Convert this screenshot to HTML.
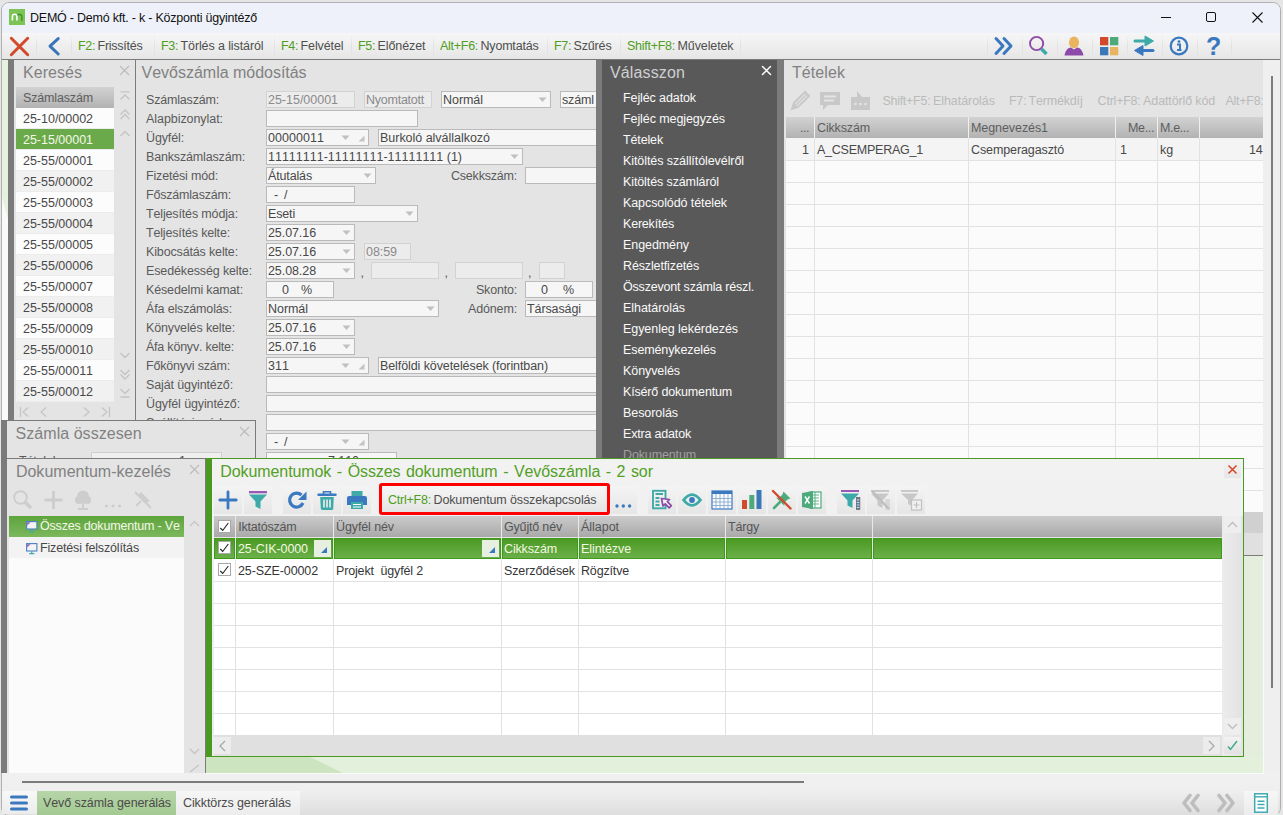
<!DOCTYPE html>
<html><head><meta charset="utf-8">
<style>
*{box-sizing:border-box;margin:0;padding:0}
html,body{width:1283px;height:815px;overflow:hidden;background:#e6e6e6;font-family:"Liberation Sans",sans-serif;font-size:12px;color:#333}
.a{position:absolute;display:block}
.t{position:absolute;white-space:nowrap;line-height:1;font-kerning:none;font-feature-settings:"kern" 0}
</style></head><body>
<div class="a" style="left:0px;top:0px;width:1283px;height:815px;background:#e6e6e6;"></div>
<div class="a" style="left:1px;top:2px;width:1280px;height:814px;background:#f0f0f0;border:1px solid #b0b0b0;border-radius:8px;box-sizing:border-box"></div>
<div class="a" style="left:2px;top:3px;width:1278px;height:30px;background:#eef1fa;border-radius:7px 7px 0 0"></div>
<svg class="a" style="left:9px;top:9px;" width="16" height="16" viewBox="0 0 16 16"><rect width="16" height="16" fill="#7cc456"/><path d="M7.9 7.9A2.45 2.45 0 0 1 12.8 7.7V11.9" stroke="#3f9c2a" stroke-width="1.6" fill="none"/><path d="M3.4 11.6V7.45A2.25 2.25 0 0 1 7.9 7.45V11.6" stroke="#fff" stroke-width="1.6" fill="none"/></svg>
<div class="t" style="left:30px;top:12px;font-size:12.5px;color:#111;letter-spacing:-0.224px;">DEMÓ - Demó kft. - k - Központi ügyintéző</div>
<div class="a" style="left:1161px;top:17px;width:10px;height:1px;background:#111;"></div>
<div class="a" style="left:1206px;top:12px;width:10px;height:10px;background:transparent;border:1px solid #111;border-radius:2px"></div>
<svg class="a" style="left:1251px;top:11px;" width="13" height="13" viewBox="0 0 13 13"><path d="M1.5 1.5L11.5 11.5M11.5 1.5L1.5 11.5" stroke="#111" stroke-width="1.1"/></svg>
<div class="a" style="left:2px;top:33px;width:1278px;height:26px;background:linear-gradient(#f6f6f6,#e6e6e6);"></div>
<div class="a" style="left:2px;top:59px;width:1278px;height:1px;background:#7b7b7b;"></div>
<div class="a" style="left:36px;top:34px;width:1px;height:24px;background:linear-gradient(rgba(0,0,0,0),rgba(0,0,0,0.06),rgba(0,0,0,0));"></div>
<div class="a" style="left:71px;top:34px;width:1px;height:24px;background:linear-gradient(rgba(0,0,0,0),rgba(0,0,0,0.06),rgba(0,0,0,0));"></div>
<div class="a" style="left:154px;top:34px;width:1px;height:24px;background:linear-gradient(rgba(0,0,0,0),rgba(0,0,0,0.06),rgba(0,0,0,0));"></div>
<div class="a" style="left:274px;top:34px;width:1px;height:24px;background:linear-gradient(rgba(0,0,0,0),rgba(0,0,0,0.06),rgba(0,0,0,0));"></div>
<div class="a" style="left:351px;top:34px;width:1px;height:24px;background:linear-gradient(rgba(0,0,0,0),rgba(0,0,0,0.06),rgba(0,0,0,0));"></div>
<div class="a" style="left:433px;top:34px;width:1px;height:24px;background:linear-gradient(rgba(0,0,0,0),rgba(0,0,0,0.06),rgba(0,0,0,0));"></div>
<div class="a" style="left:547px;top:34px;width:1px;height:24px;background:linear-gradient(rgba(0,0,0,0),rgba(0,0,0,0.06),rgba(0,0,0,0));"></div>
<div class="a" style="left:620px;top:34px;width:1px;height:24px;background:linear-gradient(rgba(0,0,0,0),rgba(0,0,0,0.06),rgba(0,0,0,0));"></div>
<div class="a" style="left:740px;top:34px;width:1px;height:24px;background:linear-gradient(rgba(0,0,0,0),rgba(0,0,0,0.06),rgba(0,0,0,0));"></div>
<svg class="a" style="left:9px;top:36px;" width="21" height="21" viewBox="0 0 21 21"><path d="M2.3 2.3L18.7 18.7M18.7 2.3L2.3 18.7" stroke="#d24a2a" stroke-width="3" stroke-linecap="round"/></svg>
<svg class="a" style="left:47px;top:36px;" width="14" height="21" viewBox="0 0 14 21"><path d="M11.2 2.6L3 10.1L11.2 18" stroke="#3a74b8" stroke-width="3" fill="none" stroke-linecap="round" stroke-linejoin="round"/></svg>
<div class="t" style="left:78px;top:40px;font-size:12.5px;color:#4e9e22;letter-spacing:-0.353px;">F2:</div>
<div class="t" style="left:97.5px;top:40px;font-size:12.5px;color:#4e4e4e;letter-spacing:-0.247px;">Frissítés</div>
<div class="t" style="left:161px;top:40px;font-size:12.5px;color:#4e9e22;letter-spacing:-0.353px;">F3:</div>
<div class="t" style="left:180.5px;top:40px;font-size:12.5px;color:#4e4e4e;letter-spacing:-0.103px;">Törlés a listáról</div>
<div class="t" style="left:281px;top:40px;font-size:12.5px;color:#4e9e22;letter-spacing:-0.353px;">F4:</div>
<div class="t" style="left:300.5px;top:40px;font-size:12.5px;color:#4e4e4e;letter-spacing:-0.096px;">Felvétel</div>
<div class="t" style="left:358px;top:40px;font-size:12.5px;color:#4e9e22;letter-spacing:-0.353px;">F5:</div>
<div class="t" style="left:377.5px;top:40px;font-size:12.5px;color:#4e4e4e;letter-spacing:-0.081px;">Előnézet</div>
<div class="t" style="left:440px;top:40px;font-size:12.5px;color:#4e9e22;letter-spacing:-0.278px;">Alt+F6:</div>
<div class="t" style="left:480.5px;top:40px;font-size:12.5px;color:#4e4e4e;letter-spacing:-0.193px;">Nyomtatás</div>
<div class="t" style="left:554px;top:40px;font-size:12.5px;color:#4e9e22;letter-spacing:-0.353px;">F7:</div>
<div class="t" style="left:573.5px;top:40px;font-size:12.5px;color:#4e4e4e;letter-spacing:-0.151px;">Szűrés</div>
<div class="t" style="left:627px;top:40px;font-size:12.5px;color:#4e9e22;letter-spacing:-0.264px;">Shift+F8:</div>
<div class="t" style="left:677.5px;top:40px;font-size:12.5px;color:#4e4e4e;letter-spacing:-0.108px;">Műveletek</div>
<div class="a" style="left:987px;top:34px;width:1px;height:24px;background:linear-gradient(rgba(0,0,0,0),rgba(0,0,0,0.06),rgba(0,0,0,0));"></div>
<div class="a" style="left:1022px;top:34px;width:1px;height:24px;background:linear-gradient(rgba(0,0,0,0),rgba(0,0,0,0.06),rgba(0,0,0,0));"></div>
<div class="a" style="left:1057px;top:34px;width:1px;height:24px;background:linear-gradient(rgba(0,0,0,0),rgba(0,0,0,0.06),rgba(0,0,0,0));"></div>
<div class="a" style="left:1092px;top:34px;width:1px;height:24px;background:linear-gradient(rgba(0,0,0,0),rgba(0,0,0,0.06),rgba(0,0,0,0));"></div>
<div class="a" style="left:1127px;top:34px;width:1px;height:24px;background:linear-gradient(rgba(0,0,0,0),rgba(0,0,0,0.06),rgba(0,0,0,0));"></div>
<div class="a" style="left:1162px;top:34px;width:1px;height:24px;background:linear-gradient(rgba(0,0,0,0),rgba(0,0,0,0.06),rgba(0,0,0,0));"></div>
<div class="a" style="left:1197px;top:34px;width:1px;height:24px;background:linear-gradient(rgba(0,0,0,0),rgba(0,0,0,0.06),rgba(0,0,0,0));"></div>
<div class="a" style="left:1231px;top:34px;width:1px;height:24px;background:linear-gradient(rgba(0,0,0,0),rgba(0,0,0,0.06),rgba(0,0,0,0));"></div>
<svg class="a" style="left:993px;top:36px;" width="22" height="20" viewBox="0 0 22 20"><path d="M3 2.5L10 10L3 17.5M11 2.5L18 10L11 17.5" stroke="#3a78c0" stroke-width="3" fill="none" stroke-linecap="round" stroke-linejoin="round"/></svg>
<svg class="a" style="left:1027px;top:35px;" width="22" height="22" viewBox="0 0 22 22"><circle cx="9.6" cy="8.5" r="6.6" stroke="#8e4aa8" stroke-width="1.9" fill="none"/><path d="M14.5 14L19.5 19" stroke="#3eaaa8" stroke-width="3.6"/></svg>
<svg class="a" style="left:1063px;top:35px;" width="22" height="22" viewBox="0 0 22 22"><ellipse cx="11" cy="7.4" rx="5" ry="5.9" fill="#eab35e"/><path d="M1.5 20.5C2.5 15 5 12.8 8 12.5L11 14.5L14 12.5C17 12.8 19.5 15 20.5 20.5Z" fill="#8e4aa8"/></svg>
<svg class="a" style="left:1099px;top:36px;" width="21" height="21" viewBox="0 0 21 21"><rect x="1" y="1" width="8.3" height="8.3" fill="#d24a2e"/><rect x="11" y="1" width="8.3" height="8.3" fill="#4daa7d"/><rect x="1" y="11" width="8.3" height="8.3" fill="#3a78b8"/><rect x="11" y="11" width="8.3" height="8.3" fill="#eab35e"/></svg>
<svg class="a" style="left:1132px;top:35px;" width="24" height="22" viewBox="0 0 24 22"><path d="M3 6H15" stroke="#3eaaa8" stroke-width="3" stroke-linecap="round"/><path d="M13 1L21.5 6L13 11Z" fill="#3eaaa8" stroke="#3eaaa8" stroke-width="1" stroke-linejoin="round"/><path d="M9 15.5H21" stroke="#3a78c0" stroke-width="3" stroke-linecap="round"/><path d="M11 10.5L2.5 15.5L11 20.5Z" fill="#3a78c0" stroke="#3a78c0" stroke-width="1" stroke-linejoin="round"/></svg>
<svg class="a" style="left:1168px;top:35px;" width="22" height="22" viewBox="0 0 22 22"><circle cx="11" cy="11" r="8.3" stroke="#3a78c0" stroke-width="2.2" fill="none"/><circle cx="11" cy="6.6" r="1.4" fill="#3a78c0"/><path d="M9 9.5H12V14.5M9 15H13.5" stroke="#3a78c0" stroke-width="2" fill="none"/></svg>
<div class="t" style="left:1206px;top:34px;font-size:25px;color:#3a78c0;font-weight:bold">?</div>
<div class="a" style="left:2px;top:60px;width:6px;height:360px;background:#f9fbf8;"></div>
<svg class="a" style="left:2px;top:60px;" width="6" height="360" viewBox="0 0 6 360"><path d="M0 0H6V159L0 137Z" fill="#e6f1df"/></svg>
<div class="a" style="left:8px;top:60px;width:6px;height:360px;background:#7b7b7b;"></div>
<div class="a" style="left:14px;top:60px;width:121px;height:360px;background:#e4e4e4;"></div>
<div class="a" style="left:135px;top:60px;width:1px;height:360px;background:#7b7b7b;"></div>
<div class="t" style="left:23px;top:65px;font-size:16px;color:#818181;letter-spacing:0.043px;">Keresés</div>
<svg class="a" style="left:119px;top:65px;" width="11" height="11" viewBox="0 0 11 11"><path d="M1 1L10 10M10 1L1 10" stroke="#bcbcbc" stroke-width="1.2"/></svg>
<div class="a" style="left:16px;top:87px;width:98px;height:21px;background:linear-gradient(#d2d2d2,#b2b2b2);"></div>
<div class="t" style="left:23px;top:92px;font-size:12.5px;color:#5e5e5e;letter-spacing:-0.155px;">Számlaszám</div>
<div class="a" style="left:16px;top:108px;width:98px;height:21px;background:#fcfcfc;"></div>
<div class="t" style="left:23px;top:113px;font-size:12.5px;color:#484848;letter-spacing:-0.018px;">25-10/00002</div>
<div class="a" style="left:16px;top:128px;width:98px;height:1px;background:#ececec;"></div>
<div class="a" style="left:16px;top:129px;width:98px;height:21px;background:#6aaa4a;"></div>
<div class="t" style="left:23px;top:134px;font-size:12.5px;color:#f4f8e8;letter-spacing:-0.018px;">25-15/00001</div>
<div class="a" style="left:16px;top:149px;width:98px;height:1px;background:#ececec;"></div>
<div class="a" style="left:16px;top:150px;width:98px;height:21px;background:#fcfcfc;"></div>
<div class="t" style="left:23px;top:155px;font-size:12.5px;color:#484848;letter-spacing:-0.018px;">25-55/00001</div>
<div class="a" style="left:16px;top:170px;width:98px;height:1px;background:#ececec;"></div>
<div class="a" style="left:16px;top:171px;width:98px;height:21px;background:#f1f1f1;"></div>
<div class="t" style="left:23px;top:176px;font-size:12.5px;color:#484848;letter-spacing:-0.018px;">25-55/00002</div>
<div class="a" style="left:16px;top:191px;width:98px;height:1px;background:#ececec;"></div>
<div class="a" style="left:16px;top:192px;width:98px;height:21px;background:#fcfcfc;"></div>
<div class="t" style="left:23px;top:197px;font-size:12.5px;color:#484848;letter-spacing:-0.018px;">25-55/00003</div>
<div class="a" style="left:16px;top:212px;width:98px;height:1px;background:#ececec;"></div>
<div class="a" style="left:16px;top:213px;width:98px;height:21px;background:#f1f1f1;"></div>
<div class="t" style="left:23px;top:218px;font-size:12.5px;color:#484848;letter-spacing:-0.018px;">25-55/00004</div>
<div class="a" style="left:16px;top:233px;width:98px;height:1px;background:#ececec;"></div>
<div class="a" style="left:16px;top:234px;width:98px;height:21px;background:#fcfcfc;"></div>
<div class="t" style="left:23px;top:239px;font-size:12.5px;color:#484848;letter-spacing:-0.018px;">25-55/00005</div>
<div class="a" style="left:16px;top:254px;width:98px;height:1px;background:#ececec;"></div>
<div class="a" style="left:16px;top:255px;width:98px;height:21px;background:#f1f1f1;"></div>
<div class="t" style="left:23px;top:260px;font-size:12.5px;color:#484848;letter-spacing:-0.018px;">25-55/00006</div>
<div class="a" style="left:16px;top:275px;width:98px;height:1px;background:#ececec;"></div>
<div class="a" style="left:16px;top:276px;width:98px;height:21px;background:#fcfcfc;"></div>
<div class="t" style="left:23px;top:281px;font-size:12.5px;color:#484848;letter-spacing:-0.018px;">25-55/00007</div>
<div class="a" style="left:16px;top:296px;width:98px;height:1px;background:#ececec;"></div>
<div class="a" style="left:16px;top:297px;width:98px;height:21px;background:#f1f1f1;"></div>
<div class="t" style="left:23px;top:302px;font-size:12.5px;color:#484848;letter-spacing:-0.018px;">25-55/00008</div>
<div class="a" style="left:16px;top:317px;width:98px;height:1px;background:#ececec;"></div>
<div class="a" style="left:16px;top:318px;width:98px;height:21px;background:#fcfcfc;"></div>
<div class="t" style="left:23px;top:323px;font-size:12.5px;color:#484848;letter-spacing:-0.018px;">25-55/00009</div>
<div class="a" style="left:16px;top:338px;width:98px;height:1px;background:#ececec;"></div>
<div class="a" style="left:16px;top:339px;width:98px;height:21px;background:#f1f1f1;"></div>
<div class="t" style="left:23px;top:344px;font-size:12.5px;color:#484848;letter-spacing:-0.018px;">25-55/00010</div>
<div class="a" style="left:16px;top:359px;width:98px;height:1px;background:#ececec;"></div>
<div class="a" style="left:16px;top:360px;width:98px;height:21px;background:#fcfcfc;"></div>
<div class="t" style="left:23px;top:365px;font-size:12.5px;color:#484848;letter-spacing:-0.018px;">25-55/00011</div>
<div class="a" style="left:16px;top:380px;width:98px;height:1px;background:#ececec;"></div>
<div class="a" style="left:16px;top:381px;width:98px;height:21px;background:#f1f1f1;"></div>
<div class="t" style="left:23px;top:386px;font-size:12.5px;color:#484848;letter-spacing:-0.018px;">25-55/00012</div>
<div class="a" style="left:16px;top:401px;width:98px;height:1px;background:#ececec;"></div>
<svg class="a" style="left:119px;top:89px;" width="12" height="50" viewBox="0 0 12 50"><path d="M1.5 2.9H10.5M1.5 10.5L6 6L10.5 10.5" stroke="#c4c4c4" stroke-width="1.4" fill="none"/><path d="M1.5 25.5L6 21L10.5 25.5M1.5 30L6 25.5L10.5 30" stroke="#c4c4c4" stroke-width="1.4" fill="none"/><path d="M1.5 47L6 42.5L10.5 47" stroke="#c4c4c4" stroke-width="1.4" fill="none"/></svg>
<svg class="a" style="left:119px;top:350px;" width="12" height="50" viewBox="0 0 12 50"><path d="M1.5 3L6 7.5L10.5 3" stroke="#c4c4c4" stroke-width="1.4" fill="none"/><path d="M1.5 20L6 24.5L10.5 20M1.5 24.5L6 29L10.5 24.5" stroke="#c4c4c4" stroke-width="1.4" fill="none"/><path d="M1.5 39L6 43.5L10.5 39M1.5 47H10.5" stroke="#c4c4c4" stroke-width="1.4" fill="none"/></svg>
<svg class="a" style="left:18px;top:405px;" width="96" height="14" viewBox="0 0 96 14"><path d="M2.5 2V12M10 2.5L5 7L10 11.5" stroke="#c4c4c4" stroke-width="1.2" fill="none"/><path d="M28 2.5L23 7L28 11.5" stroke="#c4c4c4" stroke-width="1.2" fill="none"/><path d="M66 2.5L71 7L66 11.5" stroke="#c4c4c4" stroke-width="1.2" fill="none"/><path d="M84 2.5L89 7L84 11.5M91.5 2V12" stroke="#c4c4c4" stroke-width="1.2" fill="none"/></svg>
<div class="a" style="left:136px;top:60px;width:460px;height:398px;background:#e4e4e4;"></div>
<div class="t" style="left:141.6px;top:65px;font-size:16px;color:#818181;letter-spacing:-0.020px;">Vevőszámla módosítás</div>
<div class="t" style="left:146px;top:94px;font-size:12.5px;color:#5a5a5a;letter-spacing:-0.184px;">Számlaszám:</div>
<div class="t" style="left:146px;top:113px;font-size:12.5px;color:#5a5a5a;letter-spacing:-0.059px;">Alapbizonylat:</div>
<div class="t" style="left:146px;top:132px;font-size:12.5px;color:#5a5a5a;letter-spacing:-0.129px;">Ügyfél:</div>
<div class="t" style="left:146px;top:151px;font-size:12.5px;color:#5a5a5a;letter-spacing:-0.162px;">Bankszámlaszám:</div>
<div class="t" style="left:146px;top:170px;font-size:12.5px;color:#5a5a5a;letter-spacing:-0.179px;">Fizetési mód:</div>
<div class="t" style="left:146px;top:189px;font-size:12.5px;color:#5a5a5a;letter-spacing:-0.194px;">Főszámlaszám:</div>
<div class="t" style="left:146px;top:208px;font-size:12.5px;color:#5a5a5a;letter-spacing:-0.146px;">Teljesítés módja:</div>
<div class="t" style="left:146px;top:227px;font-size:12.5px;color:#5a5a5a;letter-spacing:-0.167px;">Teljesítés kelte:</div>
<div class="t" style="left:146px;top:246px;font-size:12.5px;color:#5a5a5a;letter-spacing:-0.147px;">Kibocsátás kelte:</div>
<div class="t" style="left:146px;top:265px;font-size:12.5px;color:#5a5a5a;letter-spacing:-0.133px;">Esedékesség kelte:</div>
<div class="t" style="left:146px;top:284px;font-size:12.5px;color:#5a5a5a;letter-spacing:-0.147px;">Késedelmi kamat:</div>
<div class="t" style="left:146px;top:303px;font-size:12.5px;color:#5a5a5a;letter-spacing:-0.149px;">Áfa elszámolás:</div>
<div class="t" style="left:146px;top:322px;font-size:12.5px;color:#5a5a5a;letter-spacing:-0.126px;">Könyvelés kelte:</div>
<div class="t" style="left:146px;top:341px;font-size:12.5px;color:#5a5a5a;letter-spacing:-0.218px;">Áfa könyv. kelte:</div>
<div class="t" style="left:146px;top:360px;font-size:12.5px;color:#5a5a5a;letter-spacing:-0.202px;">Főkönyvi szám:</div>
<div class="t" style="left:146px;top:379px;font-size:12.5px;color:#5a5a5a;letter-spacing:-0.122px;">Saját ügyintéző:</div>
<div class="t" style="left:146px;top:398px;font-size:12.5px;color:#5a5a5a;letter-spacing:-0.111px;">Ügyfél ügyintéző:</div>
<div class="t" style="left:146px;top:417px;font-size:12.5px;color:#5a5a5a;letter-spacing:-0.152px;">Szállítási mód:</div>
<div class="a" style="left:266px;top:91px;width:89px;height:17px;background:#ececec;border:1px solid #d2d2d2;box-sizing:border-box"></div>
<div class="t" style="left:268px;top:94px;font-size:12.5px;color:#8a8a8a;letter-spacing:-0.018px;">25-15/00001</div>
<div class="a" style="left:364px;top:91px;width:68px;height:17px;background:#ececec;border:1px solid #d2d2d2;box-sizing:border-box"></div>
<div class="t" style="left:366px;top:94px;font-size:12.5px;color:#8a8a8a;letter-spacing:-0.244px;">Nyomtatott</div>
<div class="a" style="left:441px;top:91px;width:110px;height:17px;background:#f6f6f6;border:1px solid #bababa;box-sizing:border-box"></div>
<div class="t" style="left:443px;top:94px;font-size:12.5px;color:#484848;letter-spacing:-0.047px;">Normál</div>
<svg class="a" style="left:538px;top:97px;" width="9" height="6" viewBox="0 0 9 6"><path d="M0.5 0.5H8.5L4.5 5Z" fill="#c0c0c0"/></svg>
<div class="a" style="left:560px;top:91px;width:40px;height:17px;background:#f6f6f6;border:1px solid #bababa;box-sizing:border-box;border-right:none"></div>
<div class="t" style="left:562px;top:94px;font-size:12.5px;color:#484848;letter-spacing:-0.128px;">száml</div>
<div class="a" style="left:266px;top:110px;width:152px;height:17px;background:#f6f6f6;border:1px solid #bababa;box-sizing:border-box"></div>
<div class="a" style="left:266px;top:129px;width:103px;height:17px;background:#f6f6f6;border:1px solid #bababa;box-sizing:border-box"></div>
<div class="t" style="left:268px;top:132px;font-size:12.5px;color:#484848;letter-spacing:0.048px;">00000011</div>
<svg class="a" style="left:341px;top:135px;" width="9" height="6" viewBox="0 0 9 6"><path d="M0.5 0.5H8.5L4.5 5Z" fill="#c0c0c0"/></svg>
<svg class="a" style="left:358px;top:135px;" width="7" height="7" viewBox="0 0 7 7"><path d="M6.5 0.5V6.5H0.5Z" fill="#c4c4c4"/></svg>
<div class="a" style="left:378px;top:129px;width:222px;height:17px;background:#f6f6f6;border:1px solid #bababa;box-sizing:border-box;border-right:none"></div>
<div class="t" style="left:380px;top:132px;font-size:12.5px;color:#484848;letter-spacing:-0.024px;">Burkoló alvállalkozó</div>
<div class="a" style="left:266px;top:148px;width:257px;height:17px;background:#f6f6f6;border:1px solid #bababa;box-sizing:border-box"></div>
<div class="t" style="left:268px;top:151px;font-size:12.5px;color:#484848;letter-spacing:0.003px;">11111111-11111111-11111111 (1)</div>
<svg class="a" style="left:510px;top:154px;" width="9" height="6" viewBox="0 0 9 6"><path d="M0.5 0.5H8.5L4.5 5Z" fill="#c0c0c0"/></svg>
<div class="a" style="left:266px;top:167px;width:110px;height:17px;background:#f6f6f6;border:1px solid #bababa;box-sizing:border-box"></div>
<div class="t" style="left:268px;top:170px;font-size:12.5px;color:#484848;letter-spacing:-0.146px;">Átutalás</div>
<svg class="a" style="left:363px;top:173px;" width="9" height="6" viewBox="0 0 9 6"><path d="M0.5 0.5H8.5L4.5 5Z" fill="#c0c0c0"/></svg>
<div class="t" style="right:766px;top:170px;font-size:12.5px;color:#5a5a5a;letter-spacing:-0.207px;">Csekkszám:</div>
<div class="a" style="left:525px;top:167px;width:75px;height:17px;background:#f6f6f6;border:1px solid #bababa;box-sizing:border-box;border-right:none"></div>
<div class="a" style="left:266px;top:186px;width:89px;height:17px;background:#f6f6f6;border:1px solid #bababa;box-sizing:border-box"></div>
<div class="t" style="left:274px;top:189px;font-size:12.5px;color:#484848;letter-spacing:-0.395px;">-&nbsp; /</div>
<div class="a" style="left:266px;top:205px;width:152px;height:17px;background:#f6f6f6;border:1px solid #bababa;box-sizing:border-box"></div>
<div class="t" style="left:268px;top:208px;font-size:12.5px;color:#484848;letter-spacing:-0.158px;">Eseti</div>
<svg class="a" style="left:405px;top:211px;" width="9" height="6" viewBox="0 0 9 6"><path d="M0.5 0.5H8.5L4.5 5Z" fill="#c0c0c0"/></svg>
<div class="a" style="left:266px;top:224px;width:89px;height:17px;background:#f6f6f6;border:1px solid #bababa;box-sizing:border-box"></div>
<div class="t" style="left:268px;top:227px;font-size:12.5px;color:#484848;letter-spacing:-0.082px;">25.07.16</div>
<svg class="a" style="left:342px;top:230px;" width="9" height="6" viewBox="0 0 9 6"><path d="M0.5 0.5H8.5L4.5 5Z" fill="#c0c0c0"/></svg>
<div class="a" style="left:266px;top:243px;width:89px;height:17px;background:#f6f6f6;border:1px solid #bababa;box-sizing:border-box"></div>
<div class="t" style="left:268px;top:246px;font-size:12.5px;color:#484848;letter-spacing:-0.082px;">25.07.16</div>
<svg class="a" style="left:342px;top:249px;" width="9" height="6" viewBox="0 0 9 6"><path d="M0.5 0.5H8.5L4.5 5Z" fill="#c0c0c0"/></svg>
<div class="a" style="left:364px;top:243px;width:47px;height:17px;background:#ececec;border:1px solid #d2d2d2;box-sizing:border-box"></div>
<div class="t" style="left:366px;top:246px;font-size:12.5px;color:#8a8a8a;letter-spacing:-0.056px;">08:59</div>
<div class="a" style="left:266px;top:262px;width:89px;height:17px;background:#f6f6f6;border:1px solid #bababa;box-sizing:border-box"></div>
<div class="t" style="left:268px;top:265px;font-size:12.5px;color:#484848;letter-spacing:-0.082px;">25.08.28</div>
<svg class="a" style="left:342px;top:268px;" width="9" height="6" viewBox="0 0 9 6"><path d="M0.5 0.5H8.5L4.5 5Z" fill="#c0c0c0"/></svg>
<div class="t" style="left:360.5px;top:267px;font-size:12.5px;color:#5a5a5a;letter-spacing:-0.473px;">,</div>
<div class="a" style="left:371px;top:262px;width:68px;height:17px;background:#ececec;border:1px solid #d2d2d2;box-sizing:border-box"></div>
<div class="t" style="left:444.5px;top:267px;font-size:12.5px;color:#5a5a5a;letter-spacing:-0.473px;">,</div>
<div class="a" style="left:455px;top:262px;width:68px;height:17px;background:#ececec;border:1px solid #d2d2d2;box-sizing:border-box"></div>
<div class="t" style="left:528px;top:267px;font-size:12.5px;color:#5a5a5a;letter-spacing:-0.473px;">,</div>
<div class="a" style="left:539px;top:262px;width:26px;height:17px;background:#ececec;border:1px solid #d2d2d2;box-sizing:border-box"></div>
<div class="a" style="left:266px;top:281px;width:68px;height:17px;background:#f6f6f6;border:1px solid #bababa;box-sizing:border-box"></div>
<div class="t" style="left:282px;top:284px;font-size:12.5px;color:#484848;letter-spacing:0.048px;">0</div>
<div class="t" style="left:301px;top:284px;font-size:12.5px;color:#484848;letter-spacing:-0.114px;">%</div>
<div class="t" style="right:766px;top:284px;font-size:12.5px;color:#5a5a5a;letter-spacing:-0.198px;">Skonto:</div>
<div class="a" style="left:525px;top:281px;width:68px;height:17px;background:#f6f6f6;border:1px solid #bababa;box-sizing:border-box"></div>
<div class="t" style="left:541px;top:284px;font-size:12.5px;color:#484848;letter-spacing:0.048px;">0</div>
<div class="t" style="left:563px;top:284px;font-size:12.5px;color:#484848;letter-spacing:-0.114px;">%</div>
<div class="a" style="left:266px;top:300px;width:173px;height:17px;background:#f6f6f6;border:1px solid #bababa;box-sizing:border-box"></div>
<div class="t" style="left:268px;top:303px;font-size:12.5px;color:#484848;letter-spacing:-0.047px;">Normál</div>
<svg class="a" style="left:426px;top:306px;" width="9" height="6" viewBox="0 0 9 6"><path d="M0.5 0.5H8.5L4.5 5Z" fill="#c0c0c0"/></svg>
<div class="t" style="right:766px;top:303px;font-size:12.5px;color:#5a5a5a;letter-spacing:-0.147px;">Adónem:</div>
<div class="a" style="left:525px;top:300px;width:75px;height:17px;background:#f6f6f6;border:1px solid #bababa;box-sizing:border-box;border-right:none"></div>
<div class="t" style="left:527px;top:303px;font-size:12.5px;color:#484848;letter-spacing:-0.098px;">Társasági</div>
<div class="a" style="left:266px;top:319px;width:89px;height:17px;background:#f6f6f6;border:1px solid #bababa;box-sizing:border-box"></div>
<div class="t" style="left:268px;top:322px;font-size:12.5px;color:#484848;letter-spacing:-0.082px;">25.07.16</div>
<svg class="a" style="left:342px;top:325px;" width="9" height="6" viewBox="0 0 9 6"><path d="M0.5 0.5H8.5L4.5 5Z" fill="#c0c0c0"/></svg>
<div class="a" style="left:266px;top:338px;width:89px;height:17px;background:#f6f6f6;border:1px solid #bababa;box-sizing:border-box"></div>
<div class="t" style="left:268px;top:341px;font-size:12.5px;color:#484848;letter-spacing:-0.082px;">25.07.16</div>
<svg class="a" style="left:342px;top:344px;" width="9" height="6" viewBox="0 0 9 6"><path d="M0.5 0.5H8.5L4.5 5Z" fill="#c0c0c0"/></svg>
<div class="a" style="left:266px;top:357px;width:103px;height:17px;background:#f6f6f6;border:1px solid #bababa;box-sizing:border-box"></div>
<div class="t" style="left:268px;top:360px;font-size:12.5px;color:#484848;letter-spacing:0.048px;">311</div>
<svg class="a" style="left:341px;top:363px;" width="9" height="6" viewBox="0 0 9 6"><path d="M0.5 0.5H8.5L4.5 5Z" fill="#c0c0c0"/></svg>
<svg class="a" style="left:358px;top:363px;" width="7" height="7" viewBox="0 0 7 7"><path d="M6.5 0.5V6.5H0.5Z" fill="#c4c4c4"/></svg>
<div class="a" style="left:378px;top:357px;width:222px;height:17px;background:#f6f6f6;border:1px solid #bababa;box-sizing:border-box;border-right:none"></div>
<div class="t" style="left:380px;top:360px;font-size:12.5px;color:#484848;letter-spacing:-0.091px;">Belföldi követelések (forintban)</div>
<div class="a" style="left:266px;top:376px;width:334px;height:17px;background:#f6f6f6;border:1px solid #bababa;box-sizing:border-box;border-right:none"></div>
<div class="a" style="left:266px;top:395px;width:334px;height:17px;background:#f6f6f6;border:1px solid #bababa;box-sizing:border-box;border-right:none"></div>
<div class="a" style="left:266px;top:414px;width:334px;height:17px;background:#f6f6f6;border:1px solid #bababa;box-sizing:border-box;border-right:none"></div>
<div class="a" style="left:266px;top:433px;width:103px;height:17px;background:#f6f6f6;border:1px solid #bababa;box-sizing:border-box"></div>
<div class="t" style="left:274px;top:436px;font-size:12.5px;color:#484848;letter-spacing:-0.395px;">-&nbsp; /</div>
<svg class="a" style="left:341px;top:439px;" width="9" height="6" viewBox="0 0 9 6"><path d="M0.5 0.5H8.5L4.5 5Z" fill="#c0c0c0"/></svg>
<svg class="a" style="left:358px;top:439px;" width="7" height="7" viewBox="0 0 7 7"><path d="M6.5 0.5V6.5H0.5Z" fill="#c4c4c4"/></svg>
<div class="a" style="left:266px;top:452px;width:131px;height:17px;background:#f6f6f6;border:1px solid #bababa;box-sizing:border-box"></div>
<div class="t" style="left:328px;top:455px;font-size:12.5px;color:#484848;letter-spacing:-0.056px;">7 110</div>
<div class="a" style="left:596px;top:60px;width:6px;height:398px;background:#7b7b7b;"></div>
<div class="a" style="left:602px;top:60px;width:175px;height:398px;background:#595959;"></div>
<div class="a" style="left:777px;top:60px;width:7px;height:398px;background:#7b7b7b;"></div>
<div class="t" style="left:610px;top:65px;font-size:16px;color:#cfcfcf;letter-spacing:0.131px;">Válasszon</div>
<svg class="a" style="left:761px;top:65px;" width="11" height="11" viewBox="0 0 11 11"><path d="M1.5 1.5L9.5 9.5M9.5 1.5L1.5 9.5" stroke="#fff" stroke-width="1.5" stroke-linecap="round"/></svg>
<div class="t" style="left:623px;top:92px;font-size:12.5px;color:#fafafa;letter-spacing:-0.104px;">Fejléc adatok</div>
<div class="t" style="left:623px;top:113px;font-size:12.5px;color:#fafafa;letter-spacing:-0.089px;">Fejléc megjegyzés</div>
<div class="t" style="left:623px;top:134px;font-size:12.5px;color:#fafafa;letter-spacing:-0.142px;">Tételek</div>
<div class="t" style="left:623px;top:155px;font-size:12.5px;color:#fafafa;letter-spacing:-0.079px;">Kitöltés szállítólevélről</div>
<div class="t" style="left:623px;top:176px;font-size:12.5px;color:#fafafa;letter-spacing:-0.108px;">Kitöltés számláról</div>
<div class="t" style="left:623px;top:197px;font-size:12.5px;color:#fafafa;letter-spacing:-0.090px;">Kapcsolódó tételek</div>
<div class="t" style="left:623px;top:218px;font-size:12.5px;color:#fafafa;letter-spacing:-0.200px;">Kerekítés</div>
<div class="t" style="left:623px;top:239px;font-size:12.5px;color:#fafafa;letter-spacing:-0.079px;">Engedmény</div>
<div class="t" style="left:623px;top:260px;font-size:12.5px;color:#fafafa;letter-spacing:-0.129px;">Részletfizetés</div>
<div class="t" style="left:623px;top:281px;font-size:12.5px;color:#fafafa;letter-spacing:-0.194px;">Összevont számla részl.</div>
<div class="t" style="left:623px;top:302px;font-size:12.5px;color:#fafafa;letter-spacing:-0.049px;">Elhatárolás</div>
<div class="t" style="left:623px;top:323px;font-size:12.5px;color:#fafafa;letter-spacing:-0.055px;">Egyenleg lekérdezés</div>
<div class="t" style="left:623px;top:344px;font-size:12.5px;color:#fafafa;letter-spacing:-0.106px;">Eseménykezelés</div>
<div class="t" style="left:623px;top:365px;font-size:12.5px;color:#fafafa;letter-spacing:-0.075px;">Könyvelés</div>
<div class="t" style="left:623px;top:386px;font-size:12.5px;color:#fafafa;letter-spacing:-0.168px;">Kísérő dokumentum</div>
<div class="t" style="left:623px;top:407px;font-size:12.5px;color:#fafafa;letter-spacing:-0.065px;">Besorolás</div>
<div class="t" style="left:623px;top:428px;font-size:12.5px;color:#fafafa;letter-spacing:-0.182px;">Extra adatok</div>
<div class="t" style="left:623px;top:449px;font-size:12.5px;color:#a0a0a0;letter-spacing:-0.134px;">Dokumentum</div>
<div class="a" style="left:784px;top:60px;width:479px;height:713px;background:#e4e4e4;"></div>
<div class="t" style="left:792px;top:65px;font-size:16px;color:#818181;letter-spacing:0.076px;">Tételek</div>
<svg class="a" style="left:788px;top:89px;" width="24" height="24" viewBox="0 0 24 24"><path d="M4 20L6 14L17 3L21 7L10 18Z" fill="none" stroke="#c8c8c8" stroke-width="2"/><path d="M4 20L6 14L10 18Z" fill="#c8c8c8"/><path d="M8 16L19 5" stroke="#c8c8c8" stroke-width="1.5"/></svg>
<svg class="a" style="left:818px;top:89px;" width="24" height="24" viewBox="0 0 24 24"><path d="M2 3H22V16H10L5 21V16H2Z" fill="#c8c8c8"/><path d="M6 7.5H18M6 11.5H16" stroke="#e4e4e4" stroke-width="2"/></svg>
<svg class="a" style="left:848px;top:87px;" width="24" height="24" viewBox="0 0 24 24"><path d="M3 10H9V4L14 10H22V23H3Z" fill="#c8c8c8"/><circle cx="7.5" cy="17" r="1.3" fill="#e4e4e4"/><circle cx="12.5" cy="17" r="1.3" fill="#e4e4e4"/><circle cx="17.5" cy="17" r="1.3" fill="#e4e4e4"/></svg>
<div class="t" style="left:882.4px;top:95px;font-size:12.5px;color:#bababa;letter-spacing:-0.264px;">Shift+F5:</div>
<div class="t" style="left:932.9px;top:95px;font-size:12.5px;color:#bababa;letter-spacing:-0.049px;">Elhatárolás</div>
<div class="t" style="left:1009px;top:95px;font-size:12.5px;color:#bababa;letter-spacing:-0.353px;">F7:</div>
<div class="t" style="left:1028.5px;top:95px;font-size:12.5px;color:#bababa;letter-spacing:-0.174px;">Termékdíj</div>
<div class="t" style="left:1097.6px;top:95px;font-size:12.5px;color:#bababa;letter-spacing:-0.225px;">Ctrl+F8:</div>
<div class="t" style="left:1143.1px;top:95px;font-size:12.5px;color:#bababa;letter-spacing:-0.128px;">Adattörlő kód</div>
<div class="t" style="left:1225.5px;top:95px;font-size:12.5px;color:#bababa;letter-spacing:-0.278px;">Alt+F8:</div>
<div class="a" style="left:786px;top:117px;width:477px;height:21px;background:linear-gradient(#d2d2d2,#b2b2b2);"></div>
<div class="a" style="left:786px;top:138px;width:477px;height:374px;background:#fbfbfb;"></div>
<div class="a" style="left:786px;top:138px;width:477px;height:22px;background:#f4f4f4;"></div>
<div class="a" style="left:814px;top:117px;width:1px;height:395px;background:#e2e2e2;"></div>
<div class="a" style="left:814px;top:117px;width:1px;height:21px;background:#f0f0f0;"></div>
<div class="a" style="left:968px;top:117px;width:1px;height:395px;background:#e2e2e2;"></div>
<div class="a" style="left:968px;top:117px;width:1px;height:21px;background:#f0f0f0;"></div>
<div class="a" style="left:1115px;top:117px;width:1px;height:395px;background:#e2e2e2;"></div>
<div class="a" style="left:1115px;top:117px;width:1px;height:21px;background:#f0f0f0;"></div>
<div class="a" style="left:1157px;top:117px;width:1px;height:395px;background:#e2e2e2;"></div>
<div class="a" style="left:1157px;top:117px;width:1px;height:21px;background:#f0f0f0;"></div>
<div class="a" style="left:1199px;top:117px;width:1px;height:395px;background:#e2e2e2;"></div>
<div class="a" style="left:1199px;top:117px;width:1px;height:21px;background:#f0f0f0;"></div>
<div class="a" style="left:786px;top:160px;width:477px;height:1px;background:#e2e2e2;"></div>
<div class="a" style="left:786px;top:182px;width:477px;height:1px;background:#e2e2e2;"></div>
<div class="a" style="left:786px;top:204px;width:477px;height:1px;background:#e2e2e2;"></div>
<div class="a" style="left:786px;top:226px;width:477px;height:1px;background:#e2e2e2;"></div>
<div class="a" style="left:786px;top:248px;width:477px;height:1px;background:#e2e2e2;"></div>
<div class="a" style="left:786px;top:270px;width:477px;height:1px;background:#e2e2e2;"></div>
<div class="a" style="left:786px;top:292px;width:477px;height:1px;background:#e2e2e2;"></div>
<div class="a" style="left:786px;top:314px;width:477px;height:1px;background:#e2e2e2;"></div>
<div class="a" style="left:786px;top:336px;width:477px;height:1px;background:#e2e2e2;"></div>
<div class="a" style="left:786px;top:358px;width:477px;height:1px;background:#e2e2e2;"></div>
<div class="a" style="left:786px;top:380px;width:477px;height:1px;background:#e2e2e2;"></div>
<div class="a" style="left:786px;top:402px;width:477px;height:1px;background:#e2e2e2;"></div>
<div class="a" style="left:786px;top:424px;width:477px;height:1px;background:#e2e2e2;"></div>
<div class="a" style="left:786px;top:446px;width:477px;height:1px;background:#e2e2e2;"></div>
<div class="a" style="left:786px;top:468px;width:477px;height:1px;background:#e2e2e2;"></div>
<div class="a" style="left:786px;top:490px;width:477px;height:1px;background:#e2e2e2;"></div>
<div class="t" style="right:474px;top:122px;font-size:12.5px;color:#5e5e5e;letter-spacing:-0.473px;">...</div>
<div class="t" style="left:817px;top:122px;font-size:12.5px;color:#5e5e5e;letter-spacing:-0.146px;">Cikkszám</div>
<div class="t" style="left:971px;top:122px;font-size:12.5px;color:#5e5e5e;letter-spacing:-0.075px;">Megnevezés1</div>
<div class="t" style="left:1128px;top:122px;font-size:12.5px;color:#5e5e5e;letter-spacing:-0.357px;">Me...</div>
<div class="t" style="left:1160px;top:122px;font-size:12.5px;color:#5e5e5e;letter-spacing:-0.376px;">M.e...</div>
<div class="t" style="right:474px;top:144px;font-size:12.5px;color:#484848;letter-spacing:0.048px;">1</div>
<div class="t" style="left:817px;top:144px;font-size:12.5px;color:#484848;letter-spacing:-0.236px;">A_CSEMPERAG_1</div>
<div class="t" style="left:971px;top:144px;font-size:12.5px;color:#484848;letter-spacing:-0.106px;">Csemperagasztó</div>
<div class="t" style="left:1120px;top:144px;font-size:12.5px;color:#484848;letter-spacing:0.048px;">1</div>
<div class="t" style="left:1160px;top:144px;font-size:12.5px;color:#484848;letter-spacing:-0.101px;">kg</div>
<div class="t" style="left:1249px;top:144px;font-size:12.5px;color:#484848;letter-spacing:-0.082px;">14.0</div>
<div class="a" style="left:1244px;top:512px;width:19px;height:21px;background:#d0d0d0;"></div>
<div class="a" style="left:1244px;top:533px;width:19px;height:22px;background:#e0e0e0;"></div>
<div class="a" style="left:1244px;top:555px;width:19px;height:1px;background:#7b7b7b;"></div>
<div class="a" style="left:1244px;top:556px;width:19px;height:217px;background:#e3efdc;"></div>
<div class="a" style="left:1263px;top:60px;width:17px;height:713px;background:#efefef;"></div>
<div class="a" style="left:1271px;top:76px;width:2px;height:612px;background:#7d7d7d;"></div>
<div class="a" style="left:1px;top:420px;width:255px;height:1px;background:#7b7b7b;"></div>
<div class="a" style="left:1px;top:421px;width:6px;height:352px;background:#7b7b7b;"></div>
<div class="a" style="left:7px;top:421px;width:248px;height:37px;background:#e4e4e4;"></div>
<div class="a" style="left:255px;top:421px;width:1px;height:37px;background:#7b7b7b;"></div>
<div class="t" style="left:15.6px;top:426px;font-size:16px;color:#818181;letter-spacing:0.041px;">Számla összesen</div>
<svg class="a" style="left:239px;top:426px;" width="11" height="11" viewBox="0 0 11 11"><path d="M1 1L10 10M10 1L1 10" stroke="#bcbcbc" stroke-width="1.2"/></svg>
<div class="t" style="left:19px;top:455px;font-size:12.5px;color:#5a5a5a;letter-spacing:-0.183px;">Tételek:</div>
<div class="a" style="left:91px;top:452px;width:131px;height:6px;background:#efefef;border:1px solid #cfcfcf;border-bottom:none;box-sizing:border-box"></div>
<div class="t" style="left:179px;top:455px;font-size:12.5px;color:#484848;letter-spacing:0.048px;">1</div>
<div class="a" style="left:7px;top:458px;width:199px;height:1px;background:#7b7b7b;"></div>
<div class="a" style="left:7px;top:459px;width:198px;height:314px;background:#e4e4e4;"></div>
<div class="t" style="left:15.9px;top:464px;font-size:16px;color:#818181;letter-spacing:0.015px;">Dokumentum-kezelés</div>
<svg class="a" style="left:189px;top:464px;" width="11" height="11" viewBox="0 0 11 11"><path d="M1 1L10 10M10 1L1 10" stroke="#bcbcbc" stroke-width="1.2"/></svg>
<svg class="a" style="left:12px;top:489px;" width="22" height="22" viewBox="0 0 22 22"><circle cx="8.5" cy="8.5" r="6.3" stroke="#cdcdcd" stroke-width="1.9" fill="none"/><path d="M13 13L19 19" stroke="#cdcdcd" stroke-width="3.4"/></svg>
<svg class="a" style="left:43px;top:489px;" width="22" height="22" viewBox="0 0 22 22"><path d="M10.5 2V20M1.5 11H19.5" stroke="#cdcdcd" stroke-width="2.8"/></svg>
<svg class="a" style="left:73px;top:489px;" width="22" height="22" viewBox="0 0 22 22"><circle cx="10" cy="7.5" r="6" fill="#cdcdcd"/><circle cx="6" cy="11" r="4" fill="#cdcdcd"/><circle cx="14" cy="11" r="4" fill="#cdcdcd"/><path d="M10 10V19M5 20H15" stroke="#cdcdcd" stroke-width="2"/></svg>
<svg class="a" style="left:103px;top:500px;" width="20" height="10" viewBox="0 0 20 10"><circle cx="3.5" cy="6" r="1.6" fill="#cdcdcd"/><circle cx="10" cy="6" r="1.6" fill="#cdcdcd"/><circle cx="16.5" cy="6" r="1.6" fill="#cdcdcd"/></svg>
<svg class="a" style="left:132px;top:489px;" width="22" height="22" viewBox="0 0 22 22"><path d="M9 3L18 12L14 14L6 6Z" fill="#cdcdcd"/><path d="M4 17L9 12" stroke="#cdcdcd" stroke-width="2"/><path d="M3 3L19 19" stroke="#cdcdcd" stroke-width="2.2"/></svg>
<div class="a" style="left:9px;top:516px;width:175px;height:21px;background:linear-gradient(#5ea43c,#7cb85c);"></div>
<div class="a" style="left:9px;top:537px;width:175px;height:21px;background:#f3f3f3;"></div>
<div class="a" style="left:9px;top:558px;width:175px;height:215px;background:#fbfbfb;"></div>
<svg class="a" style="left:26px;top:521px;" width="12" height="12" viewBox="0 0 12 12"><rect x="0.6" y="0.6" width="10.3" height="7.4" fill="#f4f4f4" stroke="#4a80c4" stroke-width="1.1"/><path d="M1.2 1.2H4.6L1.2 4.4Z" fill="#9b59b6"/><path d="M5.75 8.3V10M3.2 10.6H8.3" stroke="#3eaaa8" stroke-width="1.2"/></svg>
<svg class="a" style="left:26px;top:543px;" width="12" height="12" viewBox="0 0 12 12"><rect x="0.6" y="0.6" width="10.3" height="7.4" fill="#f4f4f4" stroke="#4a80c4" stroke-width="1.1"/><path d="M1.2 1.2H4.6L1.2 4.4Z" fill="#9b59b6"/><path d="M5.75 8.3V10M3.2 10.6H8.3" stroke="#3eaaa8" stroke-width="1.2"/></svg>
<div class="a" style="left:40px;top:516px;width:140px;height:21px;overflow:hidden">
<div class="t" style="left:0px;top:4px;font-size:12.5px;color:#f4f8e8;letter-spacing:-0.187px;">Összes dokumentum - Vevőszámla</div>
</div>
<div class="t" style="left:40px;top:542px;font-size:12.5px;color:#484848;letter-spacing:-0.156px;">Fizetési felszólítás</div>
<svg class="a" style="left:189px;top:520px;" width="11" height="7" viewBox="0 0 11 7"><path d="M1 6L5.5 1.5L10 6" stroke="#c4c4c4" stroke-width="1.2" fill="none"/></svg>
<svg class="a" style="left:189px;top:748px;" width="11" height="7" viewBox="0 0 11 7"><path d="M1 1L5.5 5.5L10 1" stroke="#c4c4c4" stroke-width="1.3" fill="none"/></svg>
<svg class="a" style="left:189px;top:764px;" width="11" height="9" viewBox="0 0 11 9"><path d="M1 8L10 1" stroke="#c4c4c4" stroke-width="1.2" fill="none"/></svg>
<div class="a" style="left:205px;top:459px;width:1px;height:314px;background:#7b7b7b;"></div>
<div class="a" style="left:206px;top:458px;width:1038px;height:1px;background:#4a9a22;"></div>
<div class="a" style="left:206px;top:459px;width:6px;height:298px;background:#4a9a22;"></div>
<div class="a" style="left:1243px;top:459px;width:1px;height:298px;background:#4a9a22;"></div>
<div class="a" style="left:206px;top:756px;width:1038px;height:1px;background:#4a9a22;"></div>
<div class="a" style="left:212px;top:459px;width:1031px;height:297px;background:linear-gradient(#f2f2f2,#ececec);"></div>
<div class="t" style="left:220.3px;top:464px;font-size:16px;color:#52a025;letter-spacing:-0.089px;word-spacing:1.2px">Dokumentumok - Összes dokumentum - Vevőszámla - 2 sor</div>
<div class="a" style="left:1224px;top:461px;width:17px;height:17px;background:linear-gradient(#f2f2f2,#e6e6e6);"></div>
<svg class="a" style="left:1227px;top:464px;" width="11" height="11" viewBox="0 0 11 11"><path d="M1.5 1.5L9.5 9.5M9.5 1.5L1.5 9.5" stroke="#d9482b" stroke-width="1.6"/></svg>
<div class="a" style="left:214px;top:486px;width:28px;height:28px;background:linear-gradient(#f4f4f4,#e6e6e6);"></div>
<div class="a" style="left:244px;top:486px;width:28px;height:28px;background:linear-gradient(#f4f4f4,#e6e6e6);"></div>
<div class="a" style="left:283px;top:486px;width:28px;height:28px;background:linear-gradient(#f4f4f4,#e6e6e6);"></div>
<div class="a" style="left:313px;top:486px;width:28px;height:28px;background:linear-gradient(#f4f4f4,#e6e6e6);"></div>
<div class="a" style="left:343px;top:486px;width:28px;height:28px;background:linear-gradient(#f4f4f4,#e6e6e6);"></div>
<svg class="a" style="left:218px;top:490px;" width="20" height="20" viewBox="0 0 20 20"><path d="M10 1.8V18.2M1.8 10H18.2" stroke="#3a78c0" stroke-width="2.8" stroke-linecap="round"/></svg>
<svg class="a" style="left:248px;top:490px;" width="20" height="20" viewBox="0 0 20 20"><rect x="1" y="1" width="18" height="2.3" fill="#9b59b6"/><path d="M1 4.5H19L12.5 11.5V19L7.5 16.5V11.5Z" fill="#3eaaa8"/></svg>
<svg class="a" style="left:287px;top:490px;" width="22" height="20" viewBox="0 0 22 20"><path d="M16 13A7 7 0 1 1 14.5 5" stroke="#3a78c0" stroke-width="3.2" fill="none"/><path d="M19.5 1.5V10H11Z" fill="#3a78c0"/></svg>
<svg class="a" style="left:316px;top:490px;" width="22" height="21" viewBox="0 0 22 21"><path d="M2.5 4.8H19.5" stroke="#3a78c0" stroke-width="2.4" stroke-linecap="round"/><path d="M7.5 4V1.8H14.5V4" stroke="#3a78c0" stroke-width="1.6" fill="none"/><path d="M4.2 7H17.8L17.2 18.5Q17 20 15.5 20H6.5Q5 20 4.8 18.5Z" fill="#3eaaa8"/><path d="M8 9.5V17.5M11 9.5V17.5M14 9.5V17.5" stroke="#f0f0f0" stroke-width="1.6"/></svg>
<svg class="a" style="left:346px;top:490px;" width="22" height="20" viewBox="0 0 22 20"><rect x="5.5" y="1" width="11" height="5" fill="#3eaaa8"/><path d="M1 8Q1 6 3 6H19Q21 6 21 8V15H1Z" fill="#3a78c0"/><rect x="5" y="12" width="12" height="7" fill="#3eaaa8"/><path d="M7 14.5H15M7 17H15" stroke="#fff" stroke-width="1"/></svg>
<div class="a" style="left:379px;top:483px;width:231px;height:32px;background:linear-gradient(#f6f6f6,#e4e4e4);border:3px solid #ff0000;border-radius:3px;box-sizing:border-box"></div>
<div class="t" style="left:388px;top:494px;font-size:12.5px;color:#4e9e22;letter-spacing:-0.225px;">Ctrl+F8:</div>
<div class="t" style="left:433.5px;top:494px;font-size:12.5px;color:#4e4e4e;letter-spacing:-0.122px;">Dokumentum összekapcsolás</div>
<div class="a" style="left:611px;top:486px;width:26px;height:28px;background:linear-gradient(#f4f4f4,#e6e6e6);"></div>
<svg class="a" style="left:613px;top:502px;" width="24" height="8" viewBox="0 0 24 8"><circle cx="4" cy="4" r="1.7" fill="#3a78c0"/><circle cx="10.3" cy="4" r="1.7" fill="#3a78c0"/><circle cx="16.6" cy="4" r="1.7" fill="#3a78c0"/></svg>
<div class="a" style="left:648px;top:486px;width:28px;height:28px;background:linear-gradient(#f4f4f4,#e6e6e6);"></div>
<div class="a" style="left:678px;top:486px;width:28px;height:28px;background:linear-gradient(#f4f4f4,#e6e6e6);"></div>
<div class="a" style="left:708px;top:486px;width:28px;height:28px;background:linear-gradient(#f4f4f4,#e6e6e6);"></div>
<div class="a" style="left:738px;top:486px;width:28px;height:28px;background:linear-gradient(#f4f4f4,#e6e6e6);"></div>
<div class="a" style="left:768px;top:486px;width:28px;height:28px;background:linear-gradient(#f4f4f4,#e6e6e6);"></div>
<div class="a" style="left:798px;top:486px;width:28px;height:28px;background:linear-gradient(#f4f4f4,#e6e6e6);"></div>
<div class="a" style="left:837px;top:486px;width:28px;height:28px;background:linear-gradient(#f4f4f4,#e6e6e6);"></div>
<div class="a" style="left:867px;top:486px;width:28px;height:28px;background:linear-gradient(#f4f4f4,#e6e6e6);"></div>
<div class="a" style="left:897px;top:486px;width:28px;height:28px;background:linear-gradient(#f4f4f4,#e6e6e6);"></div>
<svg class="a" style="left:651px;top:489px;" width="22" height="22" viewBox="0 0 22 22"><rect x="2" y="1.8" width="12.5" height="17.5" fill="none" stroke="#3eaaa8" stroke-width="1.9"/><path d="M4.5 5H12M4.5 9H8.5M4.5 12.5H8.5M4.5 16H8.5" stroke="#3eaaa8" stroke-width="1.8"/><path d="M10.5 9.5L18.5 10.5L16.3 12.7L20.3 16.7L18.2 18.8L14.2 14.8L12 17Z" fill="#f0f0f0" stroke="#8e4aa8" stroke-width="1.7" stroke-linejoin="round"/></svg>
<svg class="a" style="left:681px;top:490px;" width="22" height="20" viewBox="0 0 22 20"><path d="M0.8 10Q11 -3.5 21.2 10Q11 23.5 0.8 10Z" fill="#3eaaa8"/><path d="M4.5 10Q11 2 17.5 10Q11 18 4.5 10Z" fill="#f0f0f0"/><circle cx="11" cy="10" r="2.9" fill="#3a78c0"/></svg>
<svg class="a" style="left:711px;top:490px;" width="22" height="20" viewBox="0 0 22 20"><rect x="1" y="1" width="20" height="18" fill="#fafafa" stroke="#3a78c0" stroke-width="1.2"/><rect x="1" y="1" width="20" height="3" fill="#3a78c0"/><path d="M1 8.5H21M1 12H21M1 15.5H21M5 4V19M9 4V19M13 4V19M17 4V19" stroke="#7aa3d0" stroke-width="0.8"/></svg>
<svg class="a" style="left:741px;top:489px;" width="22" height="22" viewBox="0 0 22 22"><rect x="1" y="11" width="5" height="9" fill="#d24a2e"/><rect x="8.3" y="6" width="5" height="14" fill="#4daa7d"/><rect x="15.5" y="1" width="5" height="19" fill="#3a78b8"/></svg>
<svg class="a" style="left:771px;top:489px;" width="22" height="22" viewBox="0 0 22 22"><path d="M12.5 2.5L19.5 9.5L16.5 10.5L13 14L13.5 17L5 8.5L8 9L11.5 5.5Z" fill="#4daa7d"/><path d="M9 13L3 19" stroke="#4daa7d" stroke-width="2.6" stroke-linecap="round"/><path d="M2 2L19.5 19.5" stroke="#d24a2e" stroke-width="2.4" stroke-linecap="round"/></svg>
<svg class="a" style="left:801px;top:489px;" width="22" height="22" viewBox="0 0 22 22"><rect x="9" y="3" width="11" height="16" fill="#fff" stroke="#4daa7d" stroke-width="1.2"/><path d="M11 6H18M11 9H18M11 12H18M11 15H18M14 3V19" stroke="#4daa7d" stroke-width="0.9"/><path d="M1 4L12 2V20L1 18Z" fill="#4daa7d"/><path d="M4 7.5L8.5 14.5M8.5 7.5L4 14.5" stroke="#fff" stroke-width="1.4"/></svg>
<svg class="a" style="left:840px;top:489px;" width="22" height="22" viewBox="0 0 22 22"><rect x="1" y="1" width="18" height="2" fill="#9b59b6"/><path d="M1 4.5H19L12.5 11.5V19L7.5 16.5V11.5Z" fill="#3eaaa8"/><rect x="16.3" y="8.5" width="3.6" height="12" fill="#6a7fa0" stroke="#555" stroke-width="0.6"/><path d="M16.8 11H19.4M16.8 13.5H19.4M16.8 16H19.4M16.8 18.5H19.4" stroke="#cfe0f5" stroke-width="0.9"/></svg>
<svg class="a" style="left:870px;top:489px;" width="22" height="22" viewBox="0 0 22 22"><rect x="1" y="1" width="18" height="2" fill="#c8c8c8"/><path d="M1 4.5H19L12.5 11.5V19L7.5 16.5V11.5Z" fill="#c8c8c8"/><rect x="15" y="10" width="5" height="11" fill="#d8d8d8"/><path d="M2 2L19 20" stroke="#bdbdbd" stroke-width="2.2"/></svg>
<svg class="a" style="left:900px;top:489px;" width="23" height="23" viewBox="0 0 23 23"><rect x="1" y="1" width="17" height="2" fill="#c8c8c8"/><path d="M1 4.5H18L12 11V17L8 15V11Z" fill="#c8c8c8"/><rect x="11.5" y="11" width="10" height="10" fill="#f0f0f0" stroke="#c0c0c0" stroke-width="1.2"/><path d="M16.5 13V19M13.5 16H19.5" stroke="#c0c0c0" stroke-width="1.2"/></svg>
<div class="a" style="left:214px;top:516px;width:1008px;height:21px;background:linear-gradient(#cbcbcb,#a9a9a9);"></div>
<div class="a" style="left:214px;top:537px;width:1008px;height:1px;background:#e6e6e6;"></div>
<div class="a" style="left:214px;top:538px;width:21px;height:21px;background:linear-gradient(#4b9a24,#6bb04a);border:1px solid #409a1a;box-sizing:border-box"></div>
<div class="a" style="left:236px;top:538px;width:97px;height:21px;background:linear-gradient(#4b9a24,#6bb04a);border:1px solid #409a1a;box-sizing:border-box"></div>
<div class="a" style="left:334px;top:538px;width:167px;height:21px;background:linear-gradient(#4b9a24,#6bb04a);border:1px solid #409a1a;box-sizing:border-box"></div>
<div class="a" style="left:502px;top:538px;width:76px;height:21px;background:linear-gradient(#4b9a24,#6bb04a);border:1px solid #409a1a;box-sizing:border-box"></div>
<div class="a" style="left:579px;top:538px;width:146px;height:21px;background:linear-gradient(#4b9a24,#6bb04a);border:1px solid #409a1a;box-sizing:border-box"></div>
<div class="a" style="left:726px;top:538px;width:146px;height:21px;background:linear-gradient(#4b9a24,#6bb04a);border:1px solid #409a1a;box-sizing:border-box"></div>
<div class="a" style="left:873px;top:538px;width:349px;height:21px;background:linear-gradient(#4b9a24,#6bb04a);border:1px solid #409a1a;box-sizing:border-box"></div>
<div class="a" style="left:214px;top:559px;width:1008px;height:176px;background:#ffffff;"></div>
<div class="a" style="left:235px;top:516px;width:1px;height:21px;background:#e8e8e8;"></div>
<div class="a" style="left:235px;top:537px;width:1px;height:22px;background:#e6e6e6;"></div>
<div class="a" style="left:235px;top:559px;width:1px;height:176px;background:#e2e2e2;"></div>
<div class="a" style="left:333px;top:516px;width:1px;height:21px;background:#e8e8e8;"></div>
<div class="a" style="left:333px;top:537px;width:1px;height:22px;background:#e6e6e6;"></div>
<div class="a" style="left:333px;top:559px;width:1px;height:176px;background:#e2e2e2;"></div>
<div class="a" style="left:501px;top:516px;width:1px;height:21px;background:#e8e8e8;"></div>
<div class="a" style="left:501px;top:537px;width:1px;height:22px;background:#e6e6e6;"></div>
<div class="a" style="left:501px;top:559px;width:1px;height:176px;background:#e2e2e2;"></div>
<div class="a" style="left:578px;top:516px;width:1px;height:21px;background:#e8e8e8;"></div>
<div class="a" style="left:578px;top:537px;width:1px;height:22px;background:#e6e6e6;"></div>
<div class="a" style="left:578px;top:559px;width:1px;height:176px;background:#e2e2e2;"></div>
<div class="a" style="left:725px;top:516px;width:1px;height:21px;background:#e8e8e8;"></div>
<div class="a" style="left:725px;top:537px;width:1px;height:22px;background:#e6e6e6;"></div>
<div class="a" style="left:725px;top:559px;width:1px;height:176px;background:#e2e2e2;"></div>
<div class="a" style="left:872px;top:516px;width:1px;height:21px;background:#e8e8e8;"></div>
<div class="a" style="left:872px;top:537px;width:1px;height:22px;background:#e6e6e6;"></div>
<div class="a" style="left:872px;top:559px;width:1px;height:176px;background:#e2e2e2;"></div>
<div class="a" style="left:214px;top:581px;width:1008px;height:1px;background:#e2e2e2;"></div>
<div class="a" style="left:214px;top:603px;width:1008px;height:1px;background:#e2e2e2;"></div>
<div class="a" style="left:214px;top:625px;width:1008px;height:1px;background:#e2e2e2;"></div>
<div class="a" style="left:214px;top:647px;width:1008px;height:1px;background:#e2e2e2;"></div>
<div class="a" style="left:214px;top:669px;width:1008px;height:1px;background:#e2e2e2;"></div>
<div class="a" style="left:214px;top:691px;width:1008px;height:1px;background:#e2e2e2;"></div>
<div class="a" style="left:214px;top:713px;width:1008px;height:1px;background:#e2e2e2;"></div>
<div class="a" style="left:214px;top:735px;width:1008px;height:1px;background:#e2e2e2;"></div>
<svg class="a" style="left:218px;top:520px;" width="13" height="13" viewBox="0 0 13 13"><rect x="0.5" y="0.5" width="12" height="12" fill="#fff" stroke="#a8a8a8"/><path d="M2.3 8L4.7 10.5L10.3 3" stroke="#222" stroke-width="1.1" fill="none"/></svg>
<svg class="a" style="left:218px;top:541px;" width="13" height="13" viewBox="0 0 13 13"><rect x="0.5" y="0.5" width="12" height="12" fill="#fff" stroke="#a8a8a8"/><path d="M2.3 8L4.7 10.5L10.3 3" stroke="#222" stroke-width="1.1" fill="none"/></svg>
<svg class="a" style="left:218px;top:563px;" width="13" height="13" viewBox="0 0 13 13"><rect x="0.5" y="0.5" width="12" height="12" fill="#fff" stroke="#a8a8a8"/><path d="M2.3 8L4.7 10.5L10.3 3" stroke="#222" stroke-width="1.1" fill="none"/></svg>
<div class="t" style="left:238.3px;top:521px;font-size:12.5px;color:#555555;letter-spacing:-0.244px;">Iktatószám</div>
<div class="t" style="left:336px;top:521px;font-size:12.5px;color:#555555;letter-spacing:-0.106px;">Ügyfél név</div>
<div class="t" style="left:504px;top:521px;font-size:12.5px;color:#555555;letter-spacing:-0.175px;">Gyűjtő név</div>
<div class="t" style="left:581px;top:521px;font-size:12.5px;color:#555555;letter-spacing:-0.032px;">Állapot</div>
<div class="t" style="left:728px;top:521px;font-size:12.5px;color:#555555;letter-spacing:-0.190px;">Tárgy</div>
<div class="t" style="left:238px;top:543px;font-size:12.5px;color:#f4f8e0;letter-spacing:-0.080px;">25-CIK-0000</div>
<div class="a" style="left:314px;top:540px;width:17px;height:17px;background:#e6efe0;"></div>
<svg class="a" style="left:320px;top:546px;" width="8" height="8" viewBox="0 0 8 8"><path d="M7 1V7H1Z" fill="#3a78c0"/></svg>
<div class="a" style="left:482px;top:540px;width:17px;height:17px;background:#e6efe0;"></div>
<svg class="a" style="left:488px;top:546px;" width="8" height="8" viewBox="0 0 8 8"><path d="M7 1V7H1Z" fill="#3a78c0"/></svg>
<div class="t" style="left:504px;top:543px;font-size:12.5px;color:#f4f8e0;letter-spacing:-0.146px;">Cikkszám</div>
<div class="t" style="left:581px;top:543px;font-size:12.5px;color:#f4f8e0;letter-spacing:-0.080px;">Elintézve</div>
<div class="t" style="left:238px;top:565px;font-size:12.5px;color:#363636;letter-spacing:-0.108px;">25-SZE-00002</div>
<div class="t" style="left:336px;top:565px;font-size:12.5px;color:#363636;letter-spacing:-0.155px;">Projekt&nbsp; ügyfél 2</div>
<div class="t" style="left:504px;top:565px;font-size:12.5px;color:#363636;letter-spacing:-0.115px;">Szerződések</div>
<div class="t" style="left:581px;top:565px;font-size:12.5px;color:#363636;letter-spacing:-0.166px;">Rögzítve</div>
<div class="a" style="left:1222px;top:516px;width:21px;height:240px;background:linear-gradient(90deg,#ececec,#e2e2e2);"></div>
<div class="a" style="left:1224px;top:516px;width:17px;height:17px;background:#eeeeee;"></div>
<svg class="a" style="left:1227px;top:521px;" width="11" height="7" viewBox="0 0 11 7"><path d="M1 6L5.5 1.5L10 6" stroke="#bdbdbd" stroke-width="1.3" fill="none"/></svg>
<div class="a" style="left:1224px;top:718px;width:17px;height:17px;background:#eeeeee;"></div>
<svg class="a" style="left:1227px;top:723px;" width="11" height="7" viewBox="0 0 11 7"><path d="M1 1L5.5 5.5L10 1" stroke="#bdbdbd" stroke-width="1.3" fill="none"/></svg>
<div class="a" style="left:214px;top:735px;width:1008px;height:21px;background:#e0e0e0;"></div>
<div class="a" style="left:214px;top:737px;width:17px;height:17px;background:#ececec;"></div>
<svg class="a" style="left:218px;top:740px;" width="9" height="12" viewBox="0 0 9 12"><path d="M7 1L2 6L7 11" stroke="#a8a8a8" stroke-width="1.3" fill="none"/></svg>
<div class="a" style="left:1203px;top:737px;width:17px;height:17px;background:#ececec;"></div>
<svg class="a" style="left:1207px;top:740px;" width="9" height="12" viewBox="0 0 9 12"><path d="M2 1L7 6L2 11" stroke="#a8a8a8" stroke-width="1.3" fill="none"/></svg>
<div class="a" style="left:1224px;top:737px;width:17px;height:17px;background:linear-gradient(#f2f2f2,#e2e2e2);"></div>
<svg class="a" style="left:1226px;top:739px;" width="13" height="13" viewBox="0 0 13 13"><path d="M2 7.5L4.5 10.5L11 2" stroke="#3eaa80" stroke-width="1.4" fill="none"/></svg>
<div class="a" style="left:206px;top:757px;width:1057px;height:16px;background:#e3f0dc;"></div>
<svg class="a" style="left:206px;top:757px;" width="140" height="16" viewBox="0 0 140 16"><path d="M0 0H104L137 16H0Z" fill="#cde4c1"/></svg>
<div class="a" style="left:205px;top:757px;width:1px;height:16px;background:#7b7b7b;"></div>
<div class="a" style="left:1244px;top:556px;width:19px;height:1px;background:#e3f0dc;"></div>
<div class="a" style="left:2px;top:773px;width:1278px;height:42px;background:linear-gradient(#f0f0f0 0px,#efefef 17px,#dedede 42px);border-radius:0 0 7px 7px"></div>
<div class="a" style="left:206px;top:773px;width:1058px;height:1px;background:#fafafa;"></div>
<div class="a" style="left:1263px;top:556px;width:1px;height:217px;background:#fafafa;"></div>
<div class="a" style="left:22px;top:781px;width:782px;height:2px;background:#7b7b7b;"></div>
<div class="a" style="left:2px;top:791px;width:35px;height:23px;background:linear-gradient(#f8f8f8,#ececec);"></div>
<svg class="a" style="left:9px;top:794px;" width="20" height="18" viewBox="0 0 20 18"><path d="M2.5 3H17.5M2.5 9H17.5M2.5 15H17.5" stroke="#3a78c0" stroke-width="3" stroke-linecap="round"/></svg>
<div class="a" style="left:37px;top:791px;width:139px;height:24px;background:linear-gradient(#b7d5a8,#a3c992);"></div>
<div class="t" style="left:43px;top:797px;font-size:12.5px;color:#4a4a4a;letter-spacing:-0.092px;">Vevő számla generálás</div>
<div class="a" style="left:176px;top:791px;width:124px;height:24px;background:linear-gradient(#f6f6f6,#ececec);"></div>
<div class="t" style="left:183px;top:797px;font-size:12.5px;color:#4a4a4a;letter-spacing:-0.093px;">Cikktörzs generálás</div>
<svg class="a" style="left:1180px;top:792px;" width="22" height="22" viewBox="0 0 22 22"><path d="M10 3.5L4 11L10 18.5M18 3.5L12 11L18 18.5" stroke="#bdbdbd" stroke-width="3.6" fill="none" stroke-linecap="round" stroke-linejoin="round"/></svg>
<svg class="a" style="left:1215px;top:792px;" width="22" height="22" viewBox="0 0 22 22"><path d="M4 3.5L10 11L4 18.5M12 3.5L18 11L12 18.5" stroke="#bdbdbd" stroke-width="3.6" fill="none" stroke-linecap="round" stroke-linejoin="round"/></svg>
<div class="a" style="left:1244px;top:791px;width:34px;height:24px;background:linear-gradient(#f6f6f6,#ececec);"></div>
<svg class="a" style="left:1253px;top:793px;" width="16" height="20" viewBox="0 0 16 20"><rect x="1.7" y="0.8" width="12.6" height="18.4" fill="#fff" stroke="#3eaab0" stroke-width="1.5"/><path d="M1.7 3.8H14.3" stroke="#3eaab0" stroke-width="1.4"/><path d="M4.5 8.3H11.5M4.5 11.6H11.5M4.5 15H11.5" stroke="#3eaab0" stroke-width="1.5"/></svg>
</body></html>
